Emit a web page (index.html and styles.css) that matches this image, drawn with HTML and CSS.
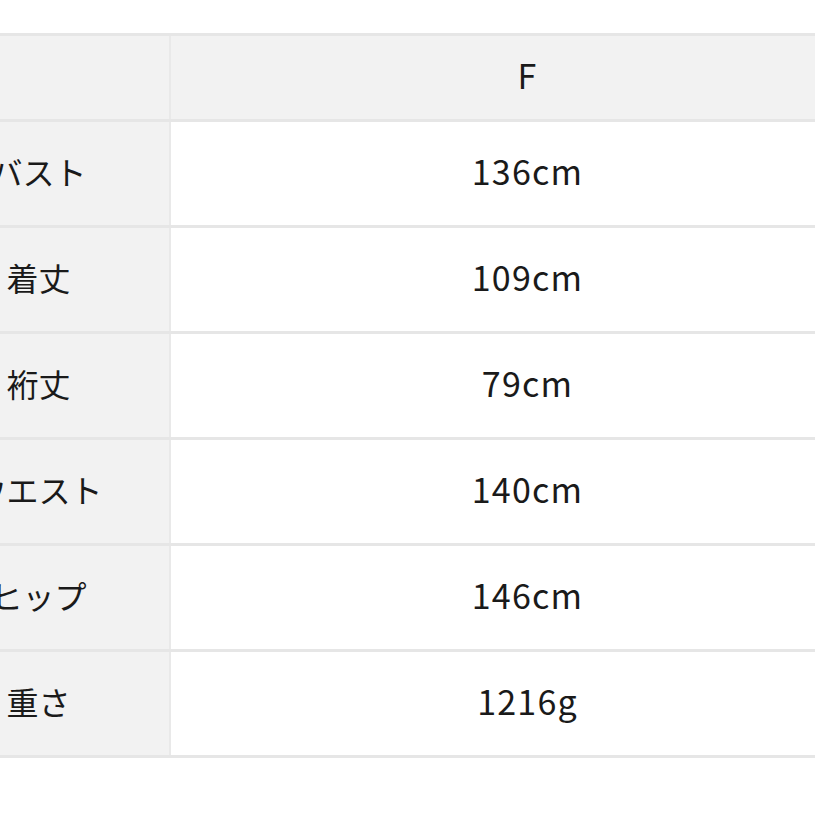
FILE: index.html
```html
<!DOCTYPE html>
<html lang="ja">
<head>
<meta charset="utf-8">
<link rel="stylesheet" href="styles.css">
</head>
<body>
<div class="wrap">
<table class="size-table">
  <tr class="head"><th class="label"></th><th class="value">F</th></tr>
  <tr><th class="label">バスト</th><td class="value">136cm</td></tr>
  <tr><th class="label">着丈</th><td class="value">109cm</td></tr>
  <tr><th class="label">裄丈</th><td class="value">79cm</td></tr>
  <tr><th class="label">ウエスト</th><td class="value">140cm</td></tr>
  <tr><th class="label">ヒップ</th><td class="value">146cm</td></tr>
  <tr><th class="label">重さ</th><td class="value">1216g</td></tr>
</table>
</div>
</body>
</html>
```
FILE: styles.css
```css
html, body {
  margin: 0;
  padding: 0;
  background: #ffffff;
  overflow: hidden;
}
.wrap {
  width: 815px;
  height: 815px;
  overflow: hidden;
  padding-top: 33px;
  box-sizing: border-box;
}
.size-table {
  margin-left: -92px;
  border-collapse: collapse;
  table-layout: fixed;
  width: 976px;
  font-family: "Noto Sans CJK JP", "Noto Sans", sans-serif;
  font-size: 32px;
  font-weight: 400;
  color: #1a1a1a;
}
.size-table th,
.size-table td {
  padding: 0 0 6px 0;
  height: 97px;
  text-align: center;
  vertical-align: middle;
  border-top: 3px solid #e6e6e6;
  border-bottom: 3px solid #e6e6e6;
  font-weight: 400;
  line-height: 1;
}
.size-table .head th {
  height: 77px;
  background: #f2f2f2;
}
.size-table .label {
  width: 261px;
  background: #f2f2f2;
  border-right: 2px solid #e9e9e9;
}
.size-table .value {
  background: #ffffff;
  font-size: 34px;
  letter-spacing: 1.2px;
}
.size-table .head .value {
  background: #f2f2f2;
}
```
